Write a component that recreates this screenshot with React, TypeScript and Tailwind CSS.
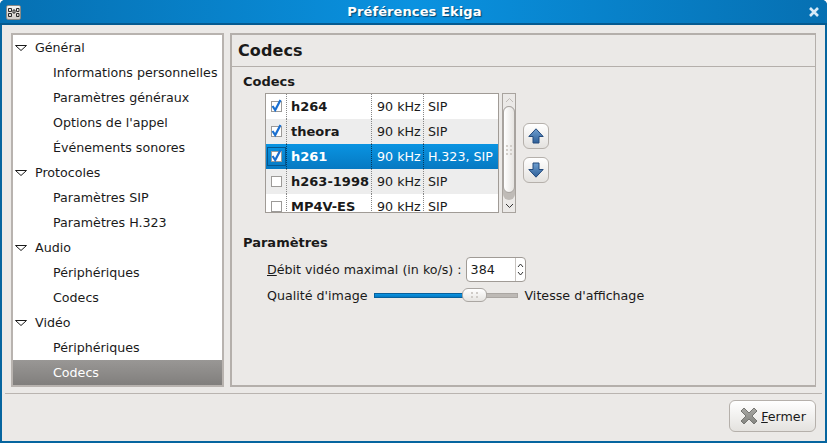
import React from "react";

const font = { fontFamily: '"DejaVu Sans", sans-serif' };

function Tri() {
  return (
    <svg width="12" height="8" viewBox="0 0 12 8" className="shrink-0">
      <path d="M0.5 1.5H11.5L6 6.5Z" fill="#fff" stroke="#1a1a1a" strokeWidth="1" />
    </svg>
  );
}

const tree: { h: string; items: string[] }[] = [
  { h: "Général", items: ["Informations personnelles", "Paramètres généraux", "Options de l'appel", "Événements sonores"] },
  { h: "Protocoles", items: ["Paramètres SIP", "Paramètres H.323"] },
  { h: "Audio", items: ["Périphériques", "Codecs"] },
  { h: "Vidéo", items: ["Périphériques", "Codecs"] },
];

function Check({ on, sel }: { on: boolean; sel?: boolean }) {
  return (
    <span className={`w-[11px] h-[11px] border border-[#9c9a98] bg-white flex items-center justify-center ${sel ? "outline outline-1 outline-[#06568e] outline-offset-[3px]" : ""}`}>
      {on && (
        <svg width="11" height="11" viewBox="0 0 11 11" className="overflow-visible">
          <path d="M1.5 5L4.2 9L9.5 -1" fill="none" stroke="#1a6fd0" strokeWidth="2.2" />
        </svg>
      )}
    </span>
  );
}

const rows = [
  { on: true, n: "h264", p: "SIP" },
  { on: true, n: "theora", p: "SIP", alt: true },
  { on: true, n: "h261", p: "H.323, SIP", sel: true },
  { on: false, n: "h263-1998", p: "SIP", alt: true },
  { on: false, n: "MP4V-ES", p: "SIP" },
];

function Arrow({ up }: { up?: boolean }) {
  return (
    <button className="w-[26px] h-[26px] rounded-[6px] border border-[#b5b0ab] bg-gradient-to-b from-white to-[#e4e2df] flex items-center justify-center">
      <svg width="16" height="16" viewBox="0 0 16 16" className={up ? "" : "rotate-180"}>
        <defs>
          <linearGradient id={up ? "au" : "ad"} x1="0" y1="0" x2="0" y2="1">
            <stop offset="0" stopColor={up ? "#6f9fd0" : "#2e5f98"} />
            <stop offset="1" stopColor={up ? "#2e5f98" : "#6f9fd0"} />
          </linearGradient>
        </defs>
        <path d="M8 0.8L15.2 8.5H11V15H5V8.5H0.8Z" fill={`url(#${up ? "au" : "ad"})`} stroke="#234a7c" strokeWidth="1" />
      </svg>
    </button>
  );
}

export default function App() {
  return (
    <div style={font} className="w-[827px] h-[443px] bg-[#06659f] rounded-t-[5px] flex flex-col text-[12.67px] text-[#1a1a1a] overflow-hidden">
      <div className="h-[25px] shrink-0 flex items-center pl-[6px] pr-[7px] pt-[1px] border-b-2 border-[#055a90] bg-gradient-to-r from-[#0670b2] via-[#0a92e0] to-[#0670b2]">
        <span className="w-[15px] h-[15px] rounded-[2px] bg-gradient-to-b from-[#f4f3f1] to-[#cfccc8] border border-[#8a8a86] flex items-center justify-center">
          <svg width="13" height="11" viewBox="0 0 13 11">
            <path d="M1.5 1.5h3v3h-3zM6 3h2v3H6zM9.5 1.5h2.5v3H9.5zM1.5 6.5h3v3h-3zM9.5 6.5h2.5v3H9.5z" fill="none" stroke="#2a2a2a" strokeWidth="1" />
          </svg>
        </span>
        <div className="flex-1 text-center text-white text-[13px] font-bold tracking-[0.1px] [text-shadow:1px_1px_1px_#05466f]">Préférences Ekiga</div>
        <svg width="12" height="12" viewBox="0 0 12 12">
          <path d="M2 2L10 10M10 2L2 10" stroke="#d7eaf7" strokeWidth="2.6" />
        </svg>
      </div>
      <div className="flex-1 mx-[2px] mb-[2px] bg-[#ebe9e7] flex flex-col min-h-0">
        <div className="flex gap-[6px] pt-[8px] pl-[9px] pr-[9px] h-[362px] shrink-0">
          <div className="w-[213px] shrink-0 border-2 border-[#b8b3af] bg-white flex flex-col">
            {tree.map((g) => (
              <React.Fragment key={g.h + g.items[0]}>
                <div className="h-[25px] flex items-center pl-[2px] gap-[8px]">
                  <Tri />
                  <span>{g.h}</span>
                </div>
                {g.items.map((t, i) => {
                  const sel = g.h === "Vidéo" && i === 1;
                  return (
                    <div key={t} className={`h-[25px] flex items-center pl-[40px] ${sel ? "bg-gradient-to-b from-[#999795] to-[#817f7d] text-white" : ""}`}>
                      {t}
                    </div>
                  );
                })}
              </React.Fragment>
            ))}
          </div>
          <div className="flex-1 border-2 border-[#b4afab] flex flex-col min-w-0 border-r-[1px]">
            <div className="h-[32px] shrink-0 border-b border-[#b4afab] flex items-center pl-[6px] text-[16px] font-bold tracking-[0.1px]">Codecs</div>
            <div className="pl-[11px] pt-[6px] flex flex-col">
              <div className="font-bold text-[13px] h-[18px] leading-[18px]">Codecs</div>
              <div className="pl-[22px] pt-[2px] flex items-center gap-[2px]">
                <div className="w-[234px] h-[120px] border border-[#a09b96] bg-white overflow-hidden shrink-0">
                  {rows.map((r) => (
                    <div key={r.n} className={`h-[25px] flex items-center ${r.sel ? "bg-gradient-to-b from-[#0a94e2] to-[#0679c2] text-white" : r.alt ? "bg-[#ededed]" : ""}`}>
                      <div className={`w-[21px] h-full shrink-0 flex items-center justify-center border-r border-dotted ${r.sel ? "border-[#053a60]" : "border-[#888]"}`}>
                        <Check on={r.on} sel={r.sel} />
                      </div>
                      <div className={`w-[85px] h-full shrink-0 flex items-center pl-[4px] font-bold text-[13px] border-r border-dotted whitespace-nowrap ${r.sel ? "border-[#053a60]" : "border-[#888]"}`}>{r.n}</div>
                      <div className={`w-[52px] h-full shrink-0 flex items-center pl-[5px] border-r border-dotted whitespace-nowrap ${r.sel ? "border-[#053a60]" : "border-[#888]"}`}>90 kHz</div>
                      <div className="pl-[4px] whitespace-nowrap">{r.p}</div>
                    </div>
                  ))}
                </div>
                <div className="w-[14px] h-[120px] ml-[1px] border border-[#a8a39e] bg-[#ebe9e7] flex flex-col shrink-0">
                  <div className="h-[12px] shrink-0 flex items-center justify-center">
                    <svg width="9" height="6" viewBox="0 0 9 6"><path d="M1 5L4.5 1.5L8 5" fill="none" stroke="#c0bcb8" /></svg>
                  </div>
                  <div className="h-[94px] shrink-0 bg-[#bfbbb7] rounded-[6px]">
                    <div className="h-[87px] rounded-[6px] bg-gradient-to-r from-white to-[#e6e4e1] border border-[#a8a4a0] flex items-center justify-center">
                      <div className="grid grid-cols-2 gap-[2px]">
                        {[0, 1, 2, 3, 4, 5].map((i) => <span key={i} className="w-[2px] h-[2px] bg-[#d2cec9]" />)}
                      </div>
                    </div>
                  </div>
                  <div className="flex-1 flex items-center justify-center">
                    <svg width="9" height="6" viewBox="0 0 9 6"><path d="M1 1L4.5 4.5L8 1" fill="none" stroke="#333" /></svg>
                  </div>
                </div>
                <div className="flex flex-col gap-[8px] ml-[5px]">
                  <Arrow up />
                  <Arrow />
                </div>
              </div>
              <div className="font-bold text-[13px] h-[18px] leading-[18px] mt-[21px]">Paramètres</div>
              <div className="pl-[24px] pt-[4px] flex flex-col">
                <div className="flex items-center h-[27px] gap-[4px]">
                  <span><u>D</u>ébit vidéo maximal (in ko/s) :</span>
                  <div className="w-[60px] h-[25px] rounded-[4px] border border-[#a09b96] bg-white flex">
                    <span className="flex-1 pl-[4px] leading-[23px]">384</span>
                    <div className="w-[10px] border-l border-[#c8c4c0] flex flex-col items-center justify-center gap-[3px]">
                      <svg width="7" height="5" viewBox="0 0 7 5"><path d="M1 4L3.5 1L6 4" fill="none" stroke="#333" /></svg>
                      <svg width="7" height="5" viewBox="0 0 7 5"><path d="M1 1L3.5 4L6 1" fill="none" stroke="#333" /></svg>
                    </div>
                  </div>
                </div>
                <div className="flex items-center h-[24px]">
                  <span>Qualité d'image</span>
                  <div className="w-[144px] h-[16px] ml-[7px] mr-[6px] relative flex items-center shrink-0">
                    <div className="w-[90px] h-[5px] bg-gradient-to-b from-[#0a94e2] to-[#0679c2] border border-[#06609c]" />
                    <div className="flex-1 h-[5px] bg-[#bdb9b5] border border-[#aaa6a2]" />
                    <div className="absolute left-[88px] top-[1px] w-[25px] h-[14px] rounded-[6px] bg-gradient-to-b from-white to-[#e6e4e1] border border-[#aaa6a2] flex items-center justify-center">
                      <div className="grid grid-cols-2 gap-x-[3px] gap-y-[2px]">
                        {[0, 1, 2, 3].map((i) => <span key={i} className="w-[2px] h-[2px] bg-[#cfcbc7]" />)}
                      </div>
                    </div>
                  </div>
                  <span>Vitesse d'affichage</span>
                </div>
              </div>
            </div>
          </div>
        </div>
        <div className="mx-[3px] mt-[6px] border-t border-[#b9b4b0] h-0" />
        <div className="flex justify-end pt-[6px] pr-[9px]">
          <button className="w-[87px] h-[32px] rounded-[6px] border border-[#b5b0ab] bg-gradient-to-b from-white to-[#e4e2df] flex items-center justify-center gap-[2px]">
            <svg width="20" height="20" viewBox="0 0 20 20">
              <defs>
                <linearGradient id="xg" x1="0" y1="0" x2="0" y2="1">
                  <stop offset="0" stopColor="#a8a8a4" />
                  <stop offset="1" stopColor="#858581" />
                </linearGradient>
              </defs>
              <path d="M2 5L5 2L10 7L15 2L18 5L13 10L18 15L15 18L10 13L5 18L2 15L7 10Z" fill="url(#xg)" stroke="#767672" strokeWidth="1" strokeLinejoin="round" />
            </svg>
            <span><u>F</u>ermer</span>
          </button>
        </div>
      </div>
    </div>
  );
}
